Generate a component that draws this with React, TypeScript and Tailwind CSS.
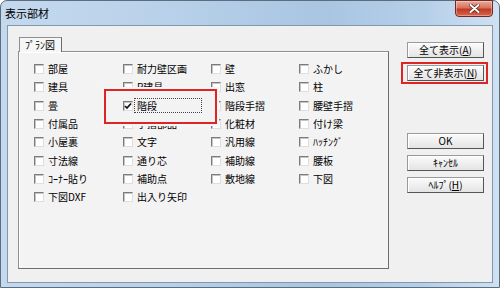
import React from "react";

const FONT = { fontFamily: '"Noto Sans CJK JP", "Noto Sans", sans-serif' };

const rows: (string | null)[][] = [
  ["部屋", "耐力壁区画", "壁", "ふかし"],
  ["建具", "R建具", "出窓", "柱"],
  ["畳", "階段", "階段手摺", "腰壁手摺"],
  ["付属品", "手摺部品", "化粧材", "付け梁"],
  ["小屋裏", "文字", "汎用線", "ﾊｯﾁﾝｸﾞ"],
  ["寸法線", "通り芯", "補助線", "腰板"],
  ["ｺｰﾅｰ貼り", "補助点", "敷地線", "下図"],
  ["下図DXF", "出入り矢印", null, null],
];

function Box({ checked }: { checked?: boolean }) {
  return (
    <span className="w-[10px] h-[10px] shrink-0 bg-white border border-t-[#7c7c7c] border-l-[#7c7c7c] border-r-[#dedede] border-b-[#dedede] shadow-[inset_1px_1px_0_#c4c4c4] flex items-center justify-center">
      {checked && (
        <svg width="8" height="8" viewBox="0 0 8 8">
          <path d="M1 4 L3 6 L7 1.5" fill="none" stroke="#111" strokeWidth="1.7" />
        </svg>
      )}
    </span>
  );
}

function Item({ label }: { label: string }) {
  const isStair = label === "階段";
  return (
    <div className={"flex items-center gap-[4px] " + (isStair ? "relative z-20" : "")}>
      <Box checked={isStair} />
      {isStair ? (
        <span className="ml-[-3px] w-[68px] h-[15px] border border-dotted border-[#444] pl-[2px] leading-[13px] text-[10px] text-black">
          {label}
        </span>
      ) : (
        <span className="text-[10px] leading-[12px] text-black whitespace-nowrap">{label}</span>
      )}
    </div>
  );
}

function Btn({ children }: { children: React.ReactNode }) {
  return (
    <div className="w-[77px] h-[16px] flex items-center justify-center text-[10px] leading-[12px] text-black bg-[linear-gradient(#fbfbfb,#e4e4e4)] border border-[#9a9a9a] border-r-[#555] border-b-[#555] shadow-[inset_1px_1px_0_#ffffff]">
      {children}
    </div>
  );
}

export default function App() {
  return (
    <div style={FONT} className="w-[500px] h-[288px] overflow-hidden bg-white">
      <div className="w-[500px] h-[288px] flex flex-col border border-[#5d6d80] rounded-t-[7px] bg-[linear-gradient(90deg,#c4d9ee_0%,#b8d0e9_35%,#a9c5e2_65%,#b6cfe9_85%,#cfe1f2_100%)]">
        {/* Title bar */}
        <div className="h-[24px] flex items-start shrink-0">
          <span className="ml-[4px] mt-[5px] text-[11px] leading-[14px] text-black">表示部材</span>
          <div className="ml-auto mr-[6px] mt-[-1px] w-[38px] h-[17px] rounded-b-[4px] border border-[#6e2a22] bg-[linear-gradient(#e9a999_0%,#d8735f_45%,#c03a22_55%,#d8664c_100%)] flex items-center justify-center shadow-[inset_0_0_0_1px_rgba(255,255,255,0.35)]">
            <svg width="11" height="9" viewBox="0 0 11 9">
              <path d="M1.5 1 L9.5 8 M9.5 1 L1.5 8" stroke="#5a1e16" strokeWidth="3.4" strokeLinecap="round" />
              <path d="M1.5 1 L9.5 8 M9.5 1 L1.5 8" stroke="#ffffff" strokeWidth="2" strokeLinecap="round" />
            </svg>
          </div>
        </div>

        {/* Client area */}
        <div className="mx-[6px] h-[258px] shrink-0 border border-[#8397ad] bg-[#f0f0f0] flex items-start">
          {/* Tab control */}
          <div className="ml-[10px] mt-[11px] w-[371px] flex flex-col">
            <div className="ml-[1px] w-[43px] h-[15px] -mb-px relative z-10 bg-[#f6f6f6] border border-[#8e8f8f] border-b-0 border-r-[#6a6a6a] flex items-center pl-[5px] text-[10px] leading-[12px] text-black">
              ﾌﾟﾗﾝ図
            </div>
            <div className="relative h-[218px] bg-[#f3f3f3] border border-[#8e8f8f] border-r-[#6e6e6e] border-b-[#6e6e6e] shadow-[inset_1px_1px_0_#ffffff]">
              <div className="pl-[15px] pt-[8px] grid grid-cols-[89px_88px_88px_88px] auto-rows-[18.3px] items-center">
                {rows.flat().map((l, i) =>
                  l ? <Item key={i} label={l} /> : <div key={i} />
                )}
              </div>
              {/* Red highlight box */}
              <div className="absolute left-[85px] top-[37px] w-[113px] h-[35px] z-10 bg-[#f3f3f3] border-2 border-[#e02424] shadow-[0_0_0_2px_#f6f6f6]" />
            </div>
          </div>

          {/* Buttons */}
          <div className="ml-[18px] mt-[16px] flex flex-col">
            <Btn>
              全て表示(<span className="underline">A</span>)
            </Btn>
            <div className="relative mt-[7px]">
              <Btn>
                全て非表示(<span className="underline">N</span>)
              </Btn>
              <div className="absolute left-[-6px] right-[-4px] top-[-3px] bottom-[-3px] border-2 border-[#e02424]" />
            </div>
            <div className="mt-[52px] flex flex-col gap-[6px]">
              <Btn>OK</Btn>
              <Btn>ｷｬﾝｾﾙ</Btn>
              <Btn>
                ﾍﾙﾌﾟ(<span className="underline">H</span>)
              </Btn>
            </div>
          </div>
        </div>
      </div>
    </div>
  );
}
